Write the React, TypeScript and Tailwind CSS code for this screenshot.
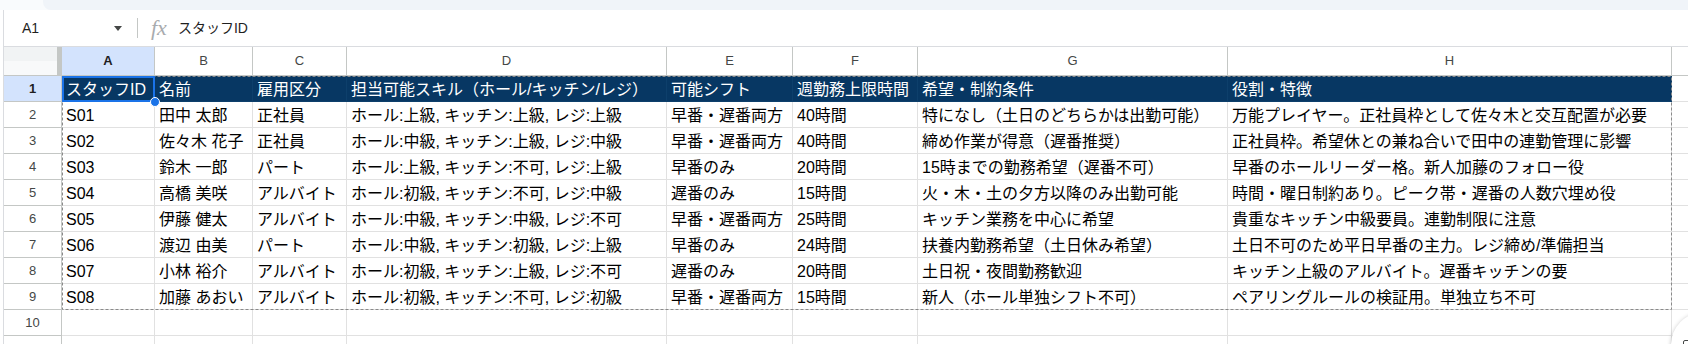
import React from "react";

const colW = [
  "w-[93px]",
  "w-[98px]",
  "w-[94px]",
  "w-[320px]",
  "w-[126px]",
  "w-[125px]",
  "w-[310px]",
  "w-[444px]",
];
const letters = ["A", "B", "C", "D", "E", "F", "G", "H"];

const header = [
  "スタッフID",
  "名前",
  "雇用区分",
  "担当可能スキル（ホール/キッチン/レジ）",
  "可能シフト",
  "週勤務上限時間",
  "希望・制約条件",
  "役割・特徴",
];

const rows: string[][] = [
  ["S01", "田中 太郎", "正社員", "ホール:上級, キッチン:上級, レジ:上級", "早番・遅番両方", "40時間", "特になし（土日のどちらかは出勤可能）", "万能プレイヤー。正社員枠として佐々木と交互配置が必要"],
  ["S02", "佐々木 花子", "正社員", "ホール:中級, キッチン:上級, レジ:中級", "早番・遅番両方", "40時間", "締め作業が得意（遅番推奨）", "正社員枠。希望休との兼ね合いで田中の連勤管理に影響"],
  ["S03", "鈴木 一郎", "パート", "ホール:上級, キッチン:不可, レジ:上級", "早番のみ", "20時間", "15時までの勤務希望（遅番不可）", "早番のホールリーダー格。新人加藤のフォロー役"],
  ["S04", "高橋 美咲", "アルバイト", "ホール:初級, キッチン:不可, レジ:中級", "遅番のみ", "15時間", "火・木・土の夕方以降のみ出勤可能", "時間・曜日制約あり。ピーク帯・遅番の人数穴埋め役"],
  ["S05", "伊藤 健太", "アルバイト", "ホール:中級, キッチン:中級, レジ:不可", "早番・遅番両方", "25時間", "キッチン業務を中心に希望", "貴重なキッチン中級要員。連勤制限に注意"],
  ["S06", "渡辺 由美", "パート", "ホール:中級, キッチン:初級, レジ:上級", "早番のみ", "24時間", "扶養内勤務希望（土日休み希望）", "土日不可のため平日早番の主力。レジ締め/準備担当"],
  ["S07", "小林 裕介", "アルバイト", "ホール:初級, キッチン:上級, レジ:不可", "遅番のみ", "20時間", "土日祝・夜間勤務歓迎", "キッチン上級のアルバイト。遅番キッチンの要"],
  ["S08", "加藤 あおい", "アルバイト", "ホール:初級, キッチン:不可, レジ:初級", "早番・遅番両方", "15時間", "新人（ホール単独シフト不可）", "ペアリングルールの検証用。単独立ち不可"],
  ["", "", "", "", "", "", "", ""],
  ["", "", "", "", "", "", "", ""],
];

function RowHeader({ n, active }: { n: number; active?: boolean }) {
  return (
    <div
      className={
        active
          ? "w-[58px] shrink-0 h-full flex items-center justify-center border-r border-b border-[#c4c7c5] bg-[#d3e3fd] text-[13px] font-bold text-[#1f1f1f]"
          : "w-[58px] shrink-0 h-full flex items-center justify-center border-r border-b border-[#c4c7c5] bg-white text-[13px] text-[#444746]"
      }
    >
      {n}
    </div>
  );
}

export default function App() {
  return (
    <div className="relative w-[1688px] h-[344px] overflow-hidden bg-white font-['Liberation_Sans','Noto_Sans_CJK_JP',sans-serif] text-black">
      {/* top strip */}
      <div className="h-[10px] bg-[#f9fbfd] flex">
        <div className="w-[43px] shrink-0" />
        <div className="flex-1 bg-[#f0f4f9] rounded-bl-[8px]" />
      </div>

      <div className="pl-[3px]">
        <div className="border-l border-[#dadce0]">
          {/* formula bar */}
          <div className="h-[36px] flex items-center bg-white">
            <div className="w-[133px] shrink-0 flex items-center justify-between pl-[18px] pr-[15px]">
              <span className="text-[14px] text-[#1f1f1f]">A1</span>
              <span className="w-0 h-0 border-l-[4px] border-r-[4px] border-t-[5px] border-l-transparent border-r-transparent border-t-[#444746]" />
            </div>
            <div className="w-px h-[20px] bg-[#c4c7c5]" />
            <span className="ml-[13px] font-['Liberation_Serif',serif] italic text-[22px] text-[#a8abae] leading-none">fx</span>
            <span className="ml-[11px] text-[14px] text-[#1f1f1f]">スタッフID</span>
          </div>

          {/* column header row */}
          <div className="h-[30px] flex border-t border-[#dadce0]">
            <div className="w-[58px] shrink-0 h-full flex">
              <div className="flex-1 flex flex-col">
                <div className="h-[14px] bg-[#f1f3f4]" />
                <div className="flex-1 bg-[#f8f9fa] border-b border-[#c4c7c5]" />
              </div>
              <div className="w-[5px] bg-[#c4c7c5]" />
            </div>
            {letters.map((l, i) => (
              <div
                key={l}
                className={
                  colW[i] +
                  " shrink-0 h-full flex items-center justify-center border-r border-b border-[#c4c7c5] text-[13px] " +
                  (i === 0 ? "bg-[#d3e3fd] font-bold text-[#1f1f1f]" : "bg-white text-[#444746]")
                }
              >
                {l}
              </div>
            ))}
            <div className="flex-1 h-full border-b border-[#c4c7c5] bg-white" />
          </div>

          {/* row 1 */}
          <div className="h-[26px] flex">
            <RowHeader n={1} active />
            {header.map((h, i) => (
              <div
                key={i}
                className={
                  colW[i] +
                  " shrink-0 h-full border-r border-b border-[#0d3f6b] bg-[#073763] text-white text-[16px] leading-[20px] pt-[4px] pl-[4px] whitespace-nowrap overflow-hidden"
                }
              >
                {h}
              </div>
            ))}
            <div className="flex-1 h-full border-b border-[#e1e1e1]" />
          </div>

          {rows.map((r, ri) => (
            <div key={ri} className="h-[26px] flex">
              <RowHeader n={ri + 2} />
              {r.map((c, i) => (
                <div
                  key={i}
                  className={
                    colW[i] +
                    " shrink-0 h-full border-r border-b border-[#e1e1e1] text-[16px] leading-[20px] pt-[4px] pl-[4px] whitespace-nowrap overflow-hidden"
                  }
                >
                  {c}
                </div>
              ))}
              <div className="flex-1 h-full border-b border-[#e1e1e1]" />
            </div>
          ))}
        </div>
      </div>

      {/* copy marching ants around A1:H9 */}
      <svg className="absolute left-[62px] top-[76px]" width="1610" height="234">
        <rect x="0.5" y="0.5" width="1609" height="233" fill="none" stroke="#8a8a8a" strokeWidth="1" strokeDasharray="3 2" />
      </svg>

      {/* selection A1 */}
      <div className="absolute left-[62px] top-[76px] w-[93px] h-[26px] border-2 border-[#1a73e8]" />
      <div className="absolute left-[150px] top-[97px] w-[10px] h-[10px] rounded-full bg-[#1a73e8] border border-white" />

      {/* floating button */}
      <div className="absolute left-[1671px] top-[312px] w-[66px] h-[66px] rounded-full bg-white shadow-[0_1px_4px_rgba(0,0,0,0.25)]">
        <div className="absolute left-[12px] top-[28px] w-[10px] h-[12px] border-[1.5px] border-[#444746] rounded-[2px]" />
      </div>
    </div>
  );
}
